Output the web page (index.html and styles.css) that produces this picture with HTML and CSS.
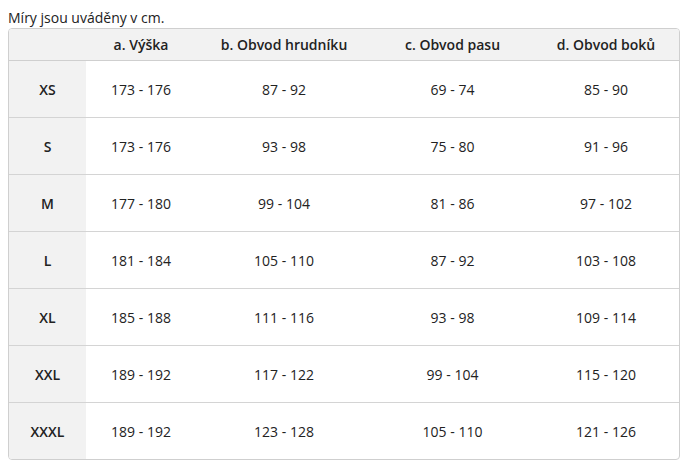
FILE: index.html
```html
<!DOCTYPE html>
<html lang="cs">
<head>
<meta charset="utf-8">
<title>Tabulka velikostí</title>
<link rel="stylesheet" href="styles.css">
</head>
<body>
<p class="note">Míry jsou uváděny v cm.</p>
<table class="sizes">
  <colgroup>
    <col class="c-size">
    <col class="c-a">
    <col class="c-b">
    <col class="c-c">
    <col class="c-d">
  </colgroup>
  <thead>
    <tr><th></th><th>a. Výška</th><th>b. Obvod hrudníku</th><th>c. Obvod pasu</th><th>d. Obvod boků</th></tr>
  </thead>
  <tbody>
    <tr><th>XS</th><td>173 - 176</td><td>87 - 92</td><td>69 - 74</td><td>85 - 90</td></tr>
    <tr><th>S</th><td>173 - 176</td><td>93 - 98</td><td>75 - 80</td><td>91 - 96</td></tr>
    <tr><th>M</th><td>177 - 180</td><td>99 - 104</td><td>81 - 86</td><td>97 - 102</td></tr>
    <tr><th>L</th><td>181 - 184</td><td>105 - 110</td><td>87 - 92</td><td>103 - 108</td></tr>
    <tr><th>XL</th><td>185 - 188</td><td>111 - 116</td><td>93 - 98</td><td>109 - 114</td></tr>
    <tr><th>XXL</th><td>189 - 192</td><td>117 - 122</td><td>99 - 104</td><td>115 - 120</td></tr>
    <tr><th>XXXL</th><td>189 - 192</td><td>123 - 128</td><td>105 - 110</td><td>121 - 126</td></tr>
  </tbody>
</table>
</body>
</html>
```
FILE: styles.css
```css
html, body {
  background: #fff;
}
body {
  margin: 0 8px;
  font-family: "Open Sans", "DejaVu Sans", sans-serif;
  font-size: 14px;
  color: #222;
}
.note {
  margin: 0;
  padding-top: 8px;
  height: 28px;
  line-height: 19px;
  box-sizing: border-box;
}
.sizes {
  width: 672px;
  table-layout: fixed;
  border-collapse: separate;
  border-spacing: 0;
  border: 1px solid #cfcfcf;
  border-radius: 4px;
  overflow: hidden;
}
.c-size { width: 77px; }
.c-a { width: 110px; }
.c-b { width: 176px; }
.c-c { width: 161px; }
.c-d { width: 146px; }
.sizes th,
.sizes td {
  text-align: center;
  padding: 0;
  vertical-align: middle;
}
.sizes thead th {
  background: #f2f2f2;
  font-weight: 600;
  height: 31px;
  border-bottom: 1px solid #cfcfcf;
}
.sizes tbody th {
  background: #f2f2f2;
  font-weight: 600;
}
.sizes tbody th,
.sizes tbody td {
  height: 56px;
  border-bottom: 1px solid #d4d4d4;
}
.sizes tbody tr:last-child th,
.sizes tbody tr:last-child td {
  border-bottom: 0;
  height: 56px;
}
```
